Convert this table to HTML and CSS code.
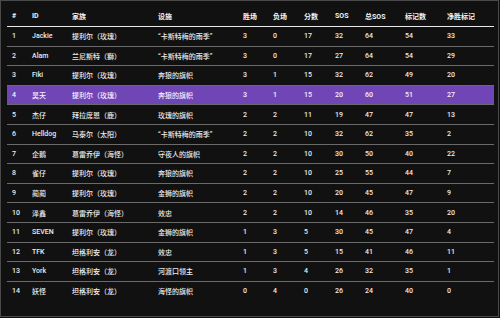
FILE: index.html
```html
<!DOCTYPE html>
<html lang="zh">
<head>
<meta charset="utf-8">
<link rel="stylesheet" href="styles.css">
</head>
<body>
<div class="frame">
  <div class="table">
    <div class="row head">
      <div>#</div><div>ID</div><div>家族</div><div>设施</div><div>胜场</div><div>负场</div><div>分数</div><div>SOS</div><div>总SOS</div><div>标记数</div><div>净胜标记</div>
    </div>
    <div class="row"><div>1</div><div>Jackie</div><div>提利尔（玫瑰）</div><div>“卡斯特梅的雨季”</div><div>3</div><div>0</div><div>17</div><div>32</div><div>64</div><div>54</div><div>33</div></div>
    <div class="row"><div>2</div><div>Alam</div><div>兰尼斯特（獅）</div><div>“卡斯特梅的雨季”</div><div>3</div><div>0</div><div>17</div><div>27</div><div>64</div><div>54</div><div>29</div></div>
    <div class="row"><div>3</div><div>Fiki</div><div>提利尔（玫瑰）</div><div>奔狼的旗帜</div><div>3</div><div>1</div><div>15</div><div>32</div><div>62</div><div>49</div><div>20</div></div>
    <div class="row hl"><div>4</div><div>昊天</div><div>提利尔（玫瑰）</div><div>奔狼的旗帜</div><div>3</div><div>1</div><div>15</div><div>20</div><div>60</div><div>51</div><div>27</div></div>
    <div class="row"><div>5</div><div>杰仔</div><div>拜拉席恩（鹿）</div><div>玫瑰的旗帜</div><div>2</div><div>2</div><div>11</div><div>19</div><div>47</div><div>47</div><div>13</div></div>
    <div class="row"><div>6</div><div>Helldog</div><div>马泰尔（太阳）</div><div>“卡斯特梅的雨季”</div><div>2</div><div>2</div><div>10</div><div>32</div><div>62</div><div>35</div><div>2</div></div>
    <div class="row"><div>7</div><div>企鹅</div><div>葛雷乔伊（海怪）</div><div>守夜人的旗帜</div><div>2</div><div>2</div><div>10</div><div>30</div><div>50</div><div>40</div><div>22</div></div>
    <div class="row"><div>8</div><div>雀仔</div><div>提利尔（玫瑰）</div><div>奔狼的旗帜</div><div>2</div><div>2</div><div>10</div><div>25</div><div>55</div><div>44</div><div>7</div></div>
    <div class="row"><div>9</div><div>蔺蔺</div><div>提利尔（玫瑰）</div><div>金狮的旗帜</div><div>2</div><div>2</div><div>10</div><div>20</div><div>45</div><div>47</div><div>9</div></div>
    <div class="row"><div>10</div><div>泽鑫</div><div>葛雷乔伊（海怪）</div><div>效忠</div><div>2</div><div>2</div><div>10</div><div>14</div><div>46</div><div>35</div><div>20</div></div>
    <div class="row"><div>11</div><div>SEVEN</div><div>提利尔（玫瑰）</div><div>金狮的旗帜</div><div>1</div><div>3</div><div>5</div><div>30</div><div>45</div><div>47</div><div>4</div></div>
    <div class="row"><div>12</div><div>TFK</div><div>坦格利安（龙）</div><div>效忠</div><div>1</div><div>3</div><div>5</div><div>15</div><div>41</div><div>46</div><div>11</div></div>
    <div class="row"><div>13</div><div>York</div><div>坦格利安（龙）</div><div>河渡口领主</div><div>1</div><div>3</div><div>4</div><div>26</div><div>32</div><div>35</div><div>1</div></div>
    <div class="row last"><div>14</div><div>妖怪</div><div>坦格利安（龙）</div><div>海怪的旗帜</div><div>0</div><div>4</div><div>0</div><div>26</div><div>24</div><div>40</div><div>0</div></div>
  </div>
</div>
</body>
</html>
```

FILE: styles.css
```css
html, body {
  margin: 0;
  padding: 0;
  background: #0f0f0f;
}
.frame {
  box-sizing: border-box;
  width: 499px;
  height: 317px;
  border: 1px solid #4a4a4a;
  background: #111111;
  padding: 5px 0 0 6px;
  font-family: "Roboto", "Noto Sans CJK SC", sans-serif;
  font-size: 7px;
  font-weight: 500;
  color: #ececec;
}
.table {
  width: 487px;
}
.row {
  display: grid;
  grid-template-columns: 20px 40px 86px 85px 30px 31px 31px 30px 40px 42px 52px;
  height: 18.6px;
  align-items: center;
  border-bottom: 1px solid #6a6a6a;
}
.row > div {
  padding-left: 5px;
  white-space: nowrap;
  overflow: hidden;
}
.head {
  height: 20px;
  font-weight: bold;
  color: #f4f4f4;
  border-bottom: 1px solid #e8e8e8;
}
.hl {
  background: #7046b6;
  color: #f6f2fb;
}
.last {
  border-bottom: none;
}
```
